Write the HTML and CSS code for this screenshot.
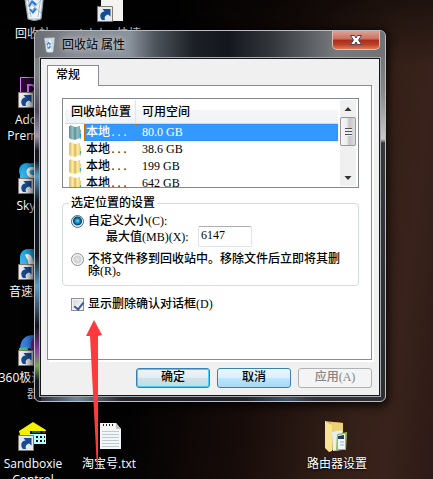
FILE: index.html
```html
<!DOCTYPE html>
<html lang="zh-CN">
<head>
<meta charset="utf-8">
<title>回收站 属性</title>
<link rel="stylesheet" href="styles.css">
</head>
<body>
<svg class="defs" aria-hidden="true">
  <defs>
    <linearGradient id="gold" x1="0" x2="1" y1="0" y2="0">
      <stop offset="0" stop-color="#e4c560"/><stop offset=".5" stop-color="#faeba4"/><stop offset="1" stop-color="#ecd077"/>
    </linearGradient>
    <linearGradient id="teal" x1="0" x2="1" y1="0" y2="0">
      <stop offset="0" stop-color="#6a9fae"/><stop offset=".5" stop-color="#91bcbe"/><stop offset="1" stop-color="#74a6b0"/>
    </linearGradient>
    <linearGradient id="sky" x1="0" x2="0" y1="0" y2="1">
      <stop offset="0" stop-color="#18a5e5"/><stop offset="1" stop-color="#63c9f5"/>
    </linearGradient>
    <symbol id="shortcut" viewBox="0 0 16 16">
      <path d="M.5 .5h15v15H.5z" fill="#e4eaf1" stroke="#82796f"/>
      <path d="M5 14C2 10.500 3 6 7.500 5.500L5.500 3h8v7.500L11.200 8.500C8.500 9 7 11 8 14z" fill="#174a8f"/>
    </symbol>
    <symbol id="bin" viewBox="0 0 22 30">
      <path d="M1 2l20-1-3 27q-7 3-13 0z" fill="#cfdae3" stroke="#909fab"/>
      <path d="M3 3l5 9 4-9 3 8 4-8-2 24H6z" fill="#eef4f8"/>
      <path d="M5 6l3 20M18 5l-3 21M3 8l15 14M18 9L6 23" stroke="#a0b2c0" stroke-width=".8"/>
      <path d="M5 15l4-6 5 4-2 2-3-3-2 4zM6 18l4 5 4-5-3-1-1 3-2-2z" fill="#2f78dc"/>
    </symbol>
    <symbol id="drive" viewBox="0 0 13 15">
      <path d="M0 1h2v12H0z" fill="#e6c662"/><path d="M1 0l5 2v13l-5-1z" fill="url(#gold)"/>
      <path d="M6 2l5-1v12l-5 2z" fill="url(#gold)"/><path d="M6 2v12" stroke="#cfa84a" stroke-width=".7"/>
      <path d="M11 4l1 1v9l-1 0z" fill="#e9d27e"/><path d="M11 9h1v3h-1z" fill="#3fa6ce"/>
    </symbol>
    <symbol id="drive-on" viewBox="0 0 13 15">
      <path d="M0 1h2v12H0z" fill="#5c92a2"/><path d="M1 0l5 2v13l-5-1z" fill="url(#teal)"/>
      <path d="M6 2l5-1v12l-5 2z" fill="url(#teal)"/><path d="M6 2v12" stroke="#4c7f8b" stroke-width=".7"/>
      <path d="M11 4l1 1v9l-1 0z" fill="#83adb4"/><path d="M11 9h1v3h-1z" fill="#2e94d2"/>
    </symbol>
  </defs>
</svg>

<main class="desktop">
  <a class="item bin" href="#bin"><svg class="pic" viewBox="0 0 32 32"><use href="#bin" x="6" y="1" width="22" height="30"/></svg>回收站</a>
  <a class="item doc" href="#doc"><svg class="pic" viewBox="0 0 32 32"><path d="M8 0h22v31H8z" fill="#f3f3f1"/><use href="#shortcut" x="4" y="16" width="16" height="16"/></svg>Adobe 快捷</a>
  <a class="item premiere" href="#premiere"><svg class="pic" viewBox="0 0 32 32"><path d="M3.500 1.500h27v27h-27z" fill="#2a0634" stroke="#d879ff"/><path d="M11 19V9h3q4 0 4 4t-4 4h-3" fill="none" stroke="#d879ff" stroke-width="2"/><use href="#shortcut" x="1" y="16" width="16" height="16"/></svg>Adobe<br>Premiere</a>
  <a class="item skype" href="#skype"><svg class="pic" viewBox="0 0 32 32"><circle cx="10" cy="9" r="8" fill="#18a5e5"/><circle cx="17" cy="15" r="14" fill="url(#sky)"/><path d="M20 7q-9-2-9 3t9 5-1 8-10-2" fill="none" stroke="#fff" stroke-width="3"/><use href="#shortcut" x="1" y="16" width="16" height="16"/></svg>Skype</a>
  <a class="item sound" href="#sound"><svg class="pic" viewBox="0 0 32 32"><rect x="3" y="1" width="28" height="28" rx="8" fill="url(#sky)"/><path d="M9 9q4-2 5 6l6 2" fill="none" stroke="#fff" stroke-width="5"/><use href="#shortcut" x="1" y="16" width="16" height="16"/></svg>音速启动</a>
  <a class="item browser" href="#browser"><svg class="pic" viewBox="0 0 32 32"><path d="M3 14Q4 1 17 1v14z" fill="#3c83e8"/><path d="M14 8Q18-2 29 9v10H14z" fill="#8c26b4"/><path d="M2 14l8-1 6 14H2z" fill="#3cc877"/><use href="#shortcut" x="1" y="16" width="16" height="16"/></svg>360极速浏览器</a>
  <a class="item sandboxie" href="#sandboxie"><svg class="pic" viewBox="0 0 32 32"><path d="M2 11L16 2l13 8-1 5H14l-2 8H5z" fill="#f5f000"/><path d="M13 12h16v12H13z" fill="#b5ffff"/><path d="M13 11h16v3H13z" fill="#101010"/><path d="M15 12h8" stroke="#16b9c4"/><path d="M26 12h2" stroke="#f03020"/><path d="M19 17h2M23 17h2M19 21h2M23 21h2M27 17h1M27 21h1" stroke="#101010" stroke-width="2"/><use href="#shortcut" x="1" y="15" width="16" height="16"/></svg>Sandboxie<br>Control</a>
  <a class="item taobao" href="#taobao"><svg class="pic" viewBox="0 0 32 32"><path d="M7 3h16l5 6v20H7z" fill="#f5f6f6"/><path d="M23 3v6h5z" fill="#bdc4c8"/><path d="M10 5h1M13 5h1M16 5h1M19 5h1" stroke="#222" stroke-width="2"/><path d="M9 11.500h17M9 14.500h17M9 17.500h17M9 20.500h17M9 23.500h17M9 26.500h17" stroke="#b9c9d9"/></svg>淘宝号.txt</a>
  <a class="item router" href="#router"><svg class="pic" viewBox="0 0 32 32"><path d="M4 1l18 2v24L8 31z" fill="#d6b04c"/><path d="M4 1l7 4v26l-3 1-4-4z" fill="#f8e490"/><path d="M9 2l13 1v9H11V5z" fill="#ecd177"/><path d="M11 12l10-2v20l-9 1z" fill="#e9efef"/><path d="M16 14l10-2-1 18H15z" fill="#8fbf5a"/><path d="M17 15l7-1v15h-7z" fill="#f1f4f7"/><path d="M17 16l6-1v4h-6z" fill="#223f66"/><path d="M19 22h4M19 25h4" stroke="#9fb5d4"/></svg>路由器设置</a>

  <section class="window" aria-label="回收站 属性">
    <header class="titlebar">
      <svg class="appicon" viewBox="0 0 22 30"><use href="#bin"/></svg>
      <h1>回收站 属性</h1>
      <button class="close" type="button" aria-label="关闭"><svg viewBox="0 0 14 12"><path d="M1.500 1.500h4L7 4l1.500-2.500h4L9.500 6l3 4.500h-4L7 8l-1.500 2.500h-4L4.500 6z" fill="#fff" stroke="#47455a"/></svg></button>
    </header>
    <form class="client">
      <button class="tab" type="button">常规</button>
      <div class="panel">
        <div class="listview">
          <table>
            <thead><tr><th class="place">回收站位置</th><th>可用空间</th></tr></thead>
            <tbody>
              <tr class="selected"><td><span class="cell"><svg viewBox="0 0 13 15"><use href="#drive-on"/></svg><span class="name">本地<span class="dots">...</span></span></span></td><td><span class="size">80.0 GB</span></td></tr>
              <tr><td><span class="cell"><svg viewBox="0 0 13 15"><use href="#drive"/></svg><span class="name">本地<span class="dots">...</span></span></span></td><td><span class="size">38.6 GB</span></td></tr>
              <tr><td><span class="cell"><svg viewBox="0 0 13 15"><use href="#drive"/></svg><span class="name">本地<span class="dots">...</span></span></span></td><td><span class="size">199 GB</span></td></tr>
              <tr><td><span class="cell"><svg viewBox="0 0 13 15"><use href="#drive"/></svg><span class="name">本地<span class="dots">...</span></span></span></td><td><span class="size">642 GB</span></td></tr>
            </tbody>
          </table>
          <div class="scrollbar">
            <svg viewBox="0 0 15 17"><path d="M4 11h7L7.500 7z" fill="#333"/></svg>
            <div class="thumb"></div>
            <svg class="down" viewBox="0 0 15 17"><path d="M4 7h7l-3.500 4z" fill="#333"/></svg>
          </div>
        </div>
        <fieldset>
          <legend>选定位置的设置</legend>
          <div class="option"><input type="radio" name="mode" id="custom" checked><label for="custom">自定义大小(C):</label></div>
          <div class="maximum"><label for="max">最大值(MB)(X):</label><input type="text" id="max" value="6147"></div>
          <div class="option"><input type="radio" name="mode" id="remove"><label for="remove">不将文件移到回收站中。移除文件后立即将其删除(R)。</label></div>
        </fieldset>
        <div class="option confirm"><input type="checkbox" id="confirm" checked><label for="confirm">显示删除确认对话框(D)</label></div>
      </div>
      <footer class="actions">
        <button class="push default" type="button">确定</button>
        <button class="push" type="button">取消</button>
        <button class="push" type="button" disabled>应用(A)</button>
      </footer>
    </form>
  </section>

  <svg class="arrow" viewBox="0 0 16 149" aria-hidden="true"><path d="M8 0l8 15-4 1 0 132-1 1L4 16H0z" fill="#ff3a3c"/></svg>
</main>
</body>
</html>
```
FILE: styles.css
```css
* { box-sizing: border-box; }
body { margin: 0; background: #000; overflow: hidden; }
.defs { position: absolute; width: 0; height: 0; }
button, input { font: inherit; color: inherit; margin: 0; }

.desktop {
  position: relative;
  min-height: 100vh;
  overflow: hidden;
  background:
    linear-gradient(180deg, rgba(0,0,0,.45), transparent 14%),
    linear-gradient(97deg, #020202 36%, #170c0a 60%, #352018 82%, #38221b 90%, #2d1916);
}

.item {
  position: absolute;
  width: 78px;
  display: flex;
  flex-direction: column;
  align-items: center;
  font: 12px/16px "Open Sans", "Noto Sans CJK SC", sans-serif;
  color: #fff;
  text-align: center;
  text-decoration: none;
  text-shadow: 0 1px 2px #000;
}
.item .pic { width: 32px; height: 32px; margin-bottom: 4px; }
.bin { left: -6px; top: -10px; }
.doc { left: 70px; top: -10px; }
.premiere { left: -6px; top: 76px; }
.skype { left: -6px; top: 162px; }
.sound { left: -6px; top: 248px; }
.browser { left: -6px; top: 334px; }
.sandboxie { left: -6px; top: 420px; }
.taobao { left: 70px; top: 420px; }
.router { left: 298px; top: 420px; }

.window {
  position: absolute;
  left: 34px;
  right: 47px;
  top: 30px;
  padding: 0 5px 5px;
  border: 1px solid #b9bcc0;
  border-radius: 6px;
  font: 500 12px/16px "Liberation Serif", "Noto Sans CJK SC", serif;
  color: #000;
  box-shadow: 0 2px 10px 2px rgba(0,0,0,.8);
  background:
    linear-gradient(180deg, #75797d 0 28px, #858789 60px, #c9c9c9 108px, #36373c 112px, #2d2e34) right / 6px 100% no-repeat,
    linear-gradient(180deg, #7e8186 0 45px, #51465f 80px, #a293ac 105px, #15171b 120px, #161a20 130px, #579bc8 145px, #121821 170px 225px, #56a0ca 255px, #33475d 280px, #111319 295px, #8b3da4 320px, #79a951 335px, #14161d 350px) left / 6px 100% no-repeat,
    linear-gradient(90deg, #24272f, #6f859b 12%, #24262d 25% 60%, #3f5268 72%, #303139 80%);
}
.titlebar {
  display: flex;
  align-items: center;
  height: 27px;
  margin: 0 -5px;
  padding-left: 8px;
  border-radius: 5px 5px 0 0;
  background: linear-gradient(90deg, #696c71, #898e95 12%, #8a929c 27%, #50565e 34%, #1d2127 45%, #13171d 55%, #34383d 68%, #777a7d 86%, #717376);
}
.appicon { width: 13px; height: 16px; margin-right: 6px; }
h1 { margin: 0; font: 12px/16px "Open Sans", "Noto Sans CJK SC", sans-serif; text-shadow: 0 0 6px #fff; }
.close {
  align-self: flex-start;
  display: flex;
  align-items: center;
  justify-content: center;
  width: 48px;
  height: 19px;
  margin-left: auto;
  margin-right: 5px;
  padding: 0;
  border: 1px solid #e0bcb5;
  border-top: 0;
  border-radius: 0 0 5px 5px;
  background: linear-gradient(#dfa092, #ca7160 45%, #a92c19 50%, #bd3f27 75%, #db7b59);
}
.close svg { width: 14px; height: 12px; }

.client {
  padding: 6px 6px 7px;
  border: 1px solid #15171b;
  outline: 1px solid #a6a9ac;
  background: #f0f0f0;
}
.tab {
  display: block;
  position: relative;
  z-index: 1;
  width: 52px;
  height: 21px;
  padding: 0 0 2px 8px;
  border: 1px solid #898c95;
  border-bottom: 0;
  background: #fff;
  text-align: left;
}
.panel {
  margin-top: -1px;
  margin-right: 1px;
  padding: 12px 12px 48px 14px;
  border: 1px solid #898c95;
  background: #fff;
  box-shadow: 2px 2px #fff;
}

.listview { display: flex; height: 90px; padding: 1px 2px; border: 1px solid #828790; overflow: hidden; }
table { flex: 1; align-self: flex-start; border-collapse: separate; border-spacing: 0; table-layout: fixed; }
th { height: 24px; padding: 0 0 0 6px; border-bottom: 1px solid #d5d8dc; background: linear-gradient(#fff 40%, #f5f6f8 45%, #f1f2f4); font-weight: 500; text-align: left; }
.place { width: 71px; border-right: 1px solid #e1e4e8; }
td { height: 17px; padding: 0; }
.cell { display: flex; align-items: center; height: 17px; padding-left: 4px; }
.cell svg { width: 13px; height: 15px; margin-right: 2px; }
.name { flex: 1; height: 17px; padding-left: 2px; line-height: 17px; }
.dots { font-family: "Liberation Mono", monospace; font-size: 10px; line-height: 1; }
.size { display: block; height: 17px; padding-left: 6px; line-height: 17px; }
.selected { color: #fff; }
.selected .name { background: #3399ff; border: 1px dotted #cc6600; border-right: 0; padding-left: 1px; line-height: 15px; }
.selected .size { background: #3399ff; border: 1px dotted #cc6600; border-left: 0; line-height: 15px; }

.scrollbar { display: flex; flex-direction: column; width: 16px; margin-left: 2px; background: #f0f0f0; }
.scrollbar svg { width: 16px; height: 17px; }
.scrollbar .down { margin-top: auto; }
.thumb {
  height: 29px;
  border: 1px solid #979797;
  border-radius: 2px;
  background:
    repeating-linear-gradient(#4e5053 0 1px, #eee 1px 3px) center / 7px 8px no-repeat,
    linear-gradient(90deg, #f7f7f7, #ededed 40%, #c6c6ca 60%, #dedee0);
}

fieldset { min-width: 0; margin: 7px 0 0; padding: 3px 8px 8px; border: 1px solid #d0dce8; border-radius: 4px; }
legend { padding: 0 2px; margin-left: -2px; }
.option { display: flex; align-items: flex-start; }
.option label { line-height: 12px; padding-top: 1px; }
.maximum { display: flex; align-items: center; gap: 4px; height: 21px; margin: -2px 0 5px 35px; }
.maximum label { width: 88px; }
.maximum input { width: 54px; height: 21px; padding: 0 2px 3px; border: 1px solid #dfe4ea; border-top-color: #abadb3; border-radius: 2px; background: #fff; }
input[type="radio"], input[type="checkbox"] { appearance: none; flex: none; width: 13px; height: 13px; margin: 1px 4px 0 0; border: 1px solid #8e8f8f; background: radial-gradient(#e3e5e7, #cdd0d3 45%, #f5f5f5 60%); }
input[type="radio"] { border-radius: 50%; }
input[type="radio"]:checked { border-color: #4a6b85; background: radial-gradient(circle at 50% 45%, #7fe0ff 0, #1693c7 2px, #0c4466 4px, #e3eef5 5px); }
.confirm { margin: 11px 0 0 9px; }
input[type="checkbox"] { position: relative; background: linear-gradient(135deg, #cfd5de, #fff); box-shadow: inset 0 0 0 1px #f4f4f4; }
input[type="checkbox"]:checked::after { content: ""; position: absolute; left: 4px; top: 1px; width: 4px; height: 8px; border: solid #3b5aa0; border-width: 0 2px 2px 0; transform: rotate(38deg); }

.actions { display: flex; justify-content: flex-end; gap: 7px; padding: 8px 1px 0 0; }
.push { width: 74px; height: 20px; padding: 0 0 2px; border: 1px solid #3c7fb1; border-radius: 3px; background: linear-gradient(#eaf6fd, #d9f0fc 50%, #bee6fd 51%, #a7d9f5); }
.default { background: linear-gradient(#f0f4f6, #e2edf1 50%, #cfe2e9 51%, #c0dce6); box-shadow: inset 0 0 0 1px #45d0f5; }
.push:disabled { border-color: #adb2b5; background: #f4f4f4; color: #838383; }

.arrow { position: absolute; left: 86px; top: 320px; width: 16px; height: 149px; }
```
